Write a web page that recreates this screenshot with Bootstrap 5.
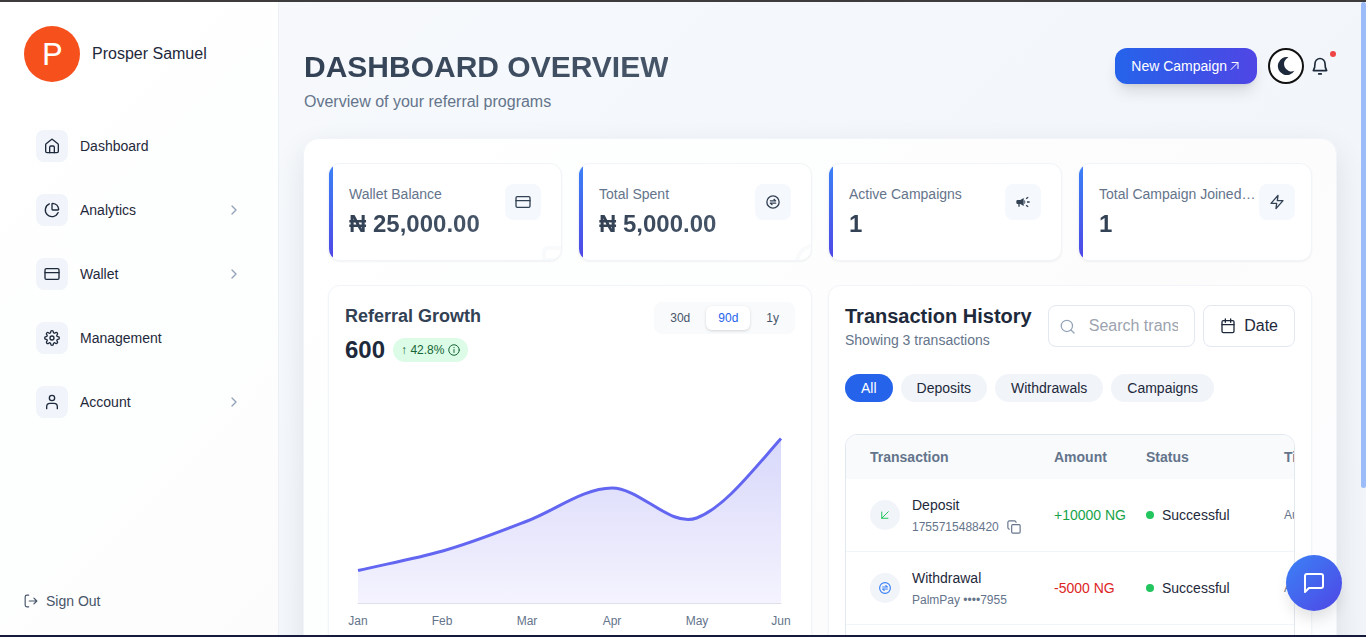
<!DOCTYPE html>
<html lang="en">
<head>
<meta charset="utf-8">
<meta name="viewport" content="width=device-width, initial-scale=1">
<title>Dashboard Overview</title>
<link href="https://cdn.jsdelivr.net/npm/bootstrap@5.3.0/dist/css/bootstrap.min.css" rel="stylesheet">
<style>
:root { --ink:#1e293b; --slate:#334155; --muted:#64748b; --line:#f1f5f9; --edge:#e2e8f0; }
body { font-family:"Liberation Sans",Arial,sans-serif; font-size:14px; line-height:20px; color:var(--ink); background:#f8fafc; }
a { color:inherit; text-decoration:none; }
svg { flex:none; display:block; }
.ico { fill:none; stroke:currentColor; stroke-width:2; stroke-linecap:round; stroke-linejoin:round; }
.shell { height:100vh; overflow:hidden; border-top:2px solid #3d3b3b; border-bottom:2px solid #15193a; padding-right:5px; background:linear-gradient(135deg,#f8f9fc 0%,#f4f8fc 40%,#f1f5f9 100%); }
.side { width:279px; flex:none; padding:24px; background:linear-gradient(135deg,#fff,#fdfefe 60%,#fdfcfd); border-right:1px solid #edf1f6; }
.avatar { width:56px; height:56px; background:#f6511d; color:#fff; font-family:Roboto,sans-serif; font-size:32px; }
.user-name { font-size:16px; line-height:24px; }
.side-nav { margin-top:48px; gap:32px; padding:0 12px; }
.side-nav a { gap:12px; }
.tile { width:32px; height:32px; border-radius:8px; background:#f1f4fa; }
.chev { color:#94a3b8; }
.sign-out { color:#475569; }
.main-area { padding:40px 24px 0; }
.page-head { padding:0 1px; }
.page-title { font-size:30px; line-height:36px; font-weight:700; margin:0 0 5px; background:linear-gradient(90deg,#334155,#475569); background-clip:text; -webkit-background-clip:text; color:transparent; }
.page-sub { font-size:16px; line-height:24px; color:var(--muted); margin:0; }
.title-block { padding-top:7px; }
.head-tools { padding-top:6px; gap:11px; }
.btn-campaign { height:36px; padding:0 16px; border:0; border-radius:12px; color:#fff; font-size:14px; gap:2px; background:linear-gradient(90deg,#2563eb,#4f46e5); box-shadow:0 10px 15px -3px rgba(0,0,0,.12),0 4px 6px -4px rgba(0,0,0,.12); }
.btn-moon { width:36px; height:36px; padding:0; border:2px solid #111; border-radius:50%; background:#fff; color:var(--ink); }
.btn-bell { width:32px; height:36px; border:0; padding:0 0 0 6px; margin-left:-11px; background:none; color:var(--ink); }
.bell-dot { position:absolute; top:3px; right:0; width:6px; height:6px; border-radius:50%; background:#ef4444; }
.panel { margin-top:24px; padding:24px; border:1px solid var(--line); border-radius:16px; background:linear-gradient(135deg,#fff,#fdfefe 30%,#fdfcfd 60%,#fcfdff); box-shadow:0 10px 30px rgba(15,23,42,.09); }
.box { background:#fff; border:1px solid var(--line); border-radius:12px; box-shadow:0 1px 2px rgba(0,0,0,.05); overflow:hidden; }
.cards4 { display:grid; grid-template-columns:repeat(4,minmax(0,1fr)); gap:16px; }
.cards2 { display:grid; grid-template-columns:repeat(2,minmax(0,1fr)); gap:16px; margin-top:24px; }
.stat { padding:20px; }
.stat::before { content:""; position:absolute; left:0; top:0; bottom:0; width:4px; background:linear-gradient(#3b82f6,#4f46e5); }
.stat-label { color:var(--muted); margin-bottom:4px; white-space:nowrap; }
.stat-value { font-size:24px; line-height:32px; font-weight:700; background:linear-gradient(90deg,#334155,#475569); background-clip:text; -webkit-background-clip:text; color:transparent; white-space:nowrap; }
.stat-tile { width:36px; height:36px; border-radius:8px; background:#f5f8fc; color:var(--slate); flex:none; }
.ghost { position:absolute; right:-28px; bottom:-28px; color:#f8fafc; }
.pane { padding:16px; }
.growth-title { font-size:18px; line-height:28px; font-weight:700; color:var(--slate); margin:0 0 4px; }
.growth-num { font-size:24px; line-height:32px; font-weight:700; }
.trend { height:24px; padding:0 8px; border-radius:12px; background:#dcfce7; color:#166534; font-size:12px; gap:4px; }
.range { background:#f9fafc; border-radius:8px; padding:4px; gap:4px; }
.range button { border:0; background:none; height:24px; border-radius:6px; padding:0 12px; font-size:12px; color:#475569; }
.range button.active { background:#fff; color:#2563eb; box-shadow:0 1px 3px rgba(0,0,0,.15); }
.growth-chart { width:100%; height:auto; margin-top:12px; }
.growth-chart text { font-size:12px; fill:var(--muted); text-anchor:middle; }
.tx-title { font-size:20px; line-height:28px; font-weight:700; margin:0; white-space:nowrap; }
.tx-count { color:var(--muted); white-space:nowrap; }
.search-wrap { flex:1; min-width:0; }
.search-wrap svg { position:absolute; left:12px; top:14px; color:#94a3b8; }
.search-wrap input { width:100%; height:42px; border:1px solid var(--edge); border-radius:8px; background:#fff; padding:0 16px 0 40px; font-size:16px; }
.search-wrap input::placeholder { color:#9ca3af; opacity:1; }
.btn-date { height:42px; border:1px solid var(--edge); border-radius:8px; background:#fff; padding:0 16px; font-size:16px; gap:8px; color:var(--ink); }
.pills { margin-top:24px; gap:8px; }
.pills button { height:28px; border:0; border-radius:14px; padding:0 16px; background:#f1f4f9; color:var(--ink); }
.pills button.active { background:#2563eb; color:#fff; }
.tx-wrap { margin-top:32px; border:1px solid var(--edge); border-radius:12px; overflow:hidden; }
.tx { width:620px; table-layout:fixed; border-collapse:separate; border-spacing:0; white-space:nowrap; }
.tx th { height:44px; padding:0 8px; background:#f8fafc; color:var(--muted); font-weight:700; }
.tx td { padding:16px 8px; border-bottom:1px solid var(--line); vertical-align:middle; }
.tx th:first-child, .tx td:first-child { padding-left:24px; }
.col-tx { width:200px; } .col-amt { width:92px; } .col-st { width:138px; }
.tx-icon { width:30px; height:30px; border-radius:50%; background:#f1f4f9; flex:none; }
.tx-ref { font-size:12px; line-height:16px; color:var(--muted); margin-top:4px; gap:8px; }
.is-in { color:#16a34a; } .is-out { color:#dc2626; } .is-swap { color:#3b82f6; }
.btn-copy { border:0; padding:0; background:none; color:var(--muted); }
.dot { width:8px; height:8px; border-radius:50%; background:#22c55e; }
.scroll-thumb { position:fixed; right:0; top:2px; width:5px; height:486px; border-radius:3px; background:#9bbcf9; }
.chat { position:fixed; right:24px; bottom:26px; width:56px; height:56px; border:0; border-radius:50%; color:#fff; background:linear-gradient(135deg,#3b82f6,#4f46e5); box-shadow:0 10px 15px -3px rgba(0,0,0,.12); }
</style>
</head>
<body>
<svg width="0" height="0" class="position-absolute" aria-hidden="true">
  <symbol id="i-card" viewBox="0 0 24 24"><rect x="1.500" y="4" width="21" height="16" rx="2"/><path d="M1.500 10h21"/></symbol>
  <symbol id="i-chev" viewBox="0 0 24 24"><path d="m9 18 6-6-6-6"/></symbol>
  <symbol id="i-swap" viewBox="0 0 24 24"><circle cx="12" cy="12" r="9.200"/><path d="M8 10.300h8l-2.500-2.300M16 13.700H8l2.500 2.300"/></symbol>
</svg>
<div class="shell d-flex">
  <aside class="side d-flex flex-column">
    <div class="d-flex align-items-center gap-2">
      <div class="avatar rounded-circle d-flex align-items-center justify-content-center me-1">P</div>
      <div class="user-name">Prosper Samuel</div>
    </div>
    <nav class="side-nav d-flex flex-column">
      <a href="#" class="d-flex align-items-center"><span class="tile d-flex align-items-center justify-content-center"><svg class="ico" width="16" height="16" viewBox="0 0 24 24"><path d="M2.500 10a2 2 0 0 1 .7-1.500l7.500-6a2 2 0 0 1 2.600 0l7.500 6a2 2 0 0 1 .7 1.500v10a2 2 0 0 1-2 2h-15a2 2 0 0 1-2-2z"/><path d="M8.500 22v-8a2 2 0 0 1 2-2h3a2 2 0 0 1 2 2v8"/></svg></span>Dashboard</a>
      <a href="#" class="d-flex align-items-center"><span class="tile d-flex align-items-center justify-content-center"><svg class="ico" width="16" height="16" viewBox="0 0 24 24"><path d="M21.210 15.890A10 10 0 1 1 8 2.830"/><path d="M21 12a1 1 0 0 0 1-1A10 10 0 0 0 13 2a1 1 0 0 0-1 1v8a1 1 0 0 0 1 1z"/></svg></span>Analytics<svg class="ico chev ms-auto" width="16" height="16"><use href="#i-chev"/></svg></a>
      <a href="#" class="d-flex align-items-center"><span class="tile d-flex align-items-center justify-content-center"><svg class="ico" width="16" height="16"><use href="#i-card"/></svg></span>Wallet<svg class="ico chev ms-auto" width="16" height="16"><use href="#i-chev"/></svg></a>
      <a href="#" class="d-flex align-items-center"><span class="tile d-flex align-items-center justify-content-center"><svg class="ico" width="16" height="16" viewBox="0 0 24 24"><circle cx="12" cy="12" r="3"/><path d="M19.400 15a1.650 1.650 0 0 0 .33 1.820l.06.06a2 2 0 1 1-2.830 2.830l-.06-.06a1.650 1.650 0 0 0-2.800 1.170V21a2 2 0 0 1-4 0v-.09A1.650 1.650 0 0 0 7.180 19.730l-.06.06a2 2 0 1 1-2.830-2.830l.06-.06A1.650 1.650 0 0 0 3.090 14H3a2 2 0 0 1 0-4h.09A1.650 1.650 0 0 0 4.270 7.180l-.06-.06a2 2 0 1 1 2.830-2.830l.06.06A1.650 1.650 0 0 0 10 3.090V3a2 2 0 0 1 4 0v.09a1.650 1.650 0 0 0 2.820 1.180l.06-.06a2 2 0 1 1 2.830 2.830l-.06.06A1.650 1.650 0 0 0 20.910 10H21a2 2 0 0 1 0 4h-.09a1.650 1.650 0 0 0-1.510 1z"/></svg></span>Management</a>
      <a href="#" class="d-flex align-items-center"><span class="tile d-flex align-items-center justify-content-center"><svg class="ico" width="16" height="16" viewBox="0 0 24 24"><circle cx="12" cy="6" r="4"/><path d="M4 22v-3a5 5 0 0 1 5-5h6a5 5 0 0 1 5 5v3"/></svg></span>Account<svg class="ico chev ms-auto" width="16" height="16"><use href="#i-chev"/></svg></a>
    </nav>
    <a href="#" class="sign-out d-flex align-items-center gap-2 mt-auto"><svg class="ico" width="14" height="14" viewBox="0 0 24 24"><path d="M8 22H5a3 3 0 0 1-3-3V5a3 3 0 0 1 3-3h3M17 17l5-5-5-5M22 12H9"/></svg>Sign Out</a>
  </aside>

  <main class="main-area flex-grow-1">
    <header class="page-head d-flex justify-content-between align-items-start">
      <div class="title-block">
        <h1 class="page-title">DASHBOARD OVERVIEW</h1>
        <p class="page-sub">Overview of your referral programs</p>
      </div>
      <div class="head-tools d-flex align-items-center">
        <button type="button" class="btn-campaign d-flex align-items-center">New Campaign<svg class="ico" width="12" height="12" viewBox="0 0 24 24"><path d="M4 19 18 5M6 5h12v12"/></svg></button>
        <button type="button" class="btn-moon d-flex align-items-center justify-content-center" aria-label="Dark mode"><svg width="20" height="20" viewBox="0 0 20 20" fill="currentColor"><path d="M12.500 1.200A9 9 0 1 0 18.500 14.800 7.200 7.200 0 0 1 12.500 1.200z"/></svg></button>
        <button type="button" class="btn-bell position-relative d-flex align-items-center" aria-label="Notifications"><svg class="ico" width="20" height="20" viewBox="0 0 24 24"><path d="M10.500 21.500h3M4 17.500h16c-1.500-2-2-4-2-8.500a6 6 0 0 0-12 0c0 4.500-.5 6.500-2 8.500z"/></svg><span class="bell-dot"></span></button>
      </div>
    </header>

    <section class="panel">
      <div class="cards4">
        <article class="box stat position-relative d-flex justify-content-between">
          <div class="me-1"><div class="stat-label">Wallet Balance</div><div class="stat-value">₦ 25,000.00</div></div>
          <span class="stat-tile d-flex align-items-center justify-content-center"><svg class="ico" width="16" height="16"><use href="#i-card"/></svg></span>
          <svg class="ico ghost" width="48" height="48"><use href="#i-card"/></svg>
        </article>
        <article class="box stat position-relative d-flex justify-content-between">
          <div class="me-1"><div class="stat-label">Total Spent</div><div class="stat-value">₦ 5,000.00</div></div>
          <span class="stat-tile d-flex align-items-center justify-content-center"><svg class="ico" width="16" height="16"><use href="#i-swap"/></svg></span>
          <svg class="ico ghost" width="48" height="48"><use href="#i-swap"/></svg>
        </article>
        <article class="box stat position-relative d-flex justify-content-between">
          <div class="me-1"><div class="stat-label">Active Campaigns</div><div class="stat-value">1</div></div>
          <span class="stat-tile d-flex align-items-center justify-content-center"><svg width="16" height="16" viewBox="0 0 24 24" fill="currentColor"><path d="M18 11v2h4v-2zM16 17.600c1 .7 2.200 1.600 3.200 2.400.4-.5.8-1.100 1.200-1.600-1-.8-2.200-1.700-3.200-2.400zM20.400 5.600 19.200 4c-1 .8-2.200 1.700-3.200 2.400l1.200 1.600c1-.7 2.200-1.600 3.200-2.400zM4 9a2 2 0 0 0-2 2v2a2 2 0 0 0 2 2h1v4h2v-4h1l5 3V6L8 9zM15.500 12a4.500 4.500 0 0 0-1.500-3.300v6.700a4.500 4.500 0 0 0 1.500-3.400z"/></svg></span>
        </article>
        <article class="box stat position-relative d-flex justify-content-between">
          <div class="me-1"><div class="stat-label">Total Campaign Joined…</div><div class="stat-value">1</div></div>
          <span class="stat-tile d-flex align-items-center justify-content-center"><svg class="ico" width="16" height="16" viewBox="0 0 24 24"><path d="M13.500 2 3 14h8.500l-1 8L21 10h-8.500z"/></svg></span>
        </article>
      </div>

      <div class="cards2">
        <section class="box pane">
          <div class="d-flex justify-content-between align-items-start">
            <div>
              <h2 class="growth-title">Referral Growth</h2>
              <div class="d-flex align-items-center gap-2">
                <span class="growth-num">600</span>
                <span class="trend d-flex align-items-center"><span>↑ 42.8%</span><svg class="ico" width="12" height="12" viewBox="0 0 24 24"><circle cx="12" cy="12" r="10.500"/><path d="M12 17v-6M12 7v.5"/></svg></span>
              </div>
            </div>
            <div class="range d-flex" role="group" aria-label="Range">
              <button type="button">30d</button><button type="button" class="active">90d</button><button type="button">1y</button>
            </div>
          </div>
          <svg class="growth-chart" viewBox="0 0 450 270" role="img" aria-label="Referral growth, January to June">
            <defs><linearGradient id="area" x1="0" y1="0" x2="0" y2="1"><stop offset="0" stop-color="#d8d8fb"/><stop offset="1" stop-color="#f4f3fe"/></linearGradient></defs>
            <path fill="url(#area)" d="M13 192.500C41 186 69 181 97.700 173S154 154 182.300 143C210.500 132 239 110 267 110C295 110 326 150 351.700 140C380 129 408 92 436 60.500V225H13z"/>
            <path stroke="#dfe1ea" d="M12.500 225.500h424"/>
            <path fill="none" stroke="#6366f1" stroke-width="3" d="M13 192.500C41 186 69 181 97.700 173S154 154 182.300 143C210.500 132 239 110 267 110C295 110 326 150 351.700 140C380 129 408 92 436 60.500"/>
            <text x="13" y="247">Jan</text><text x="97" y="247">Feb</text><text x="182" y="247">Mar</text><text x="267" y="247">Apr</text><text x="352" y="247">May</text><text x="436" y="247">Jun</text>
          </svg>
        </section>

        <section class="box pane">
          <div class="d-flex align-items-center gap-3">
            <div><h2 class="tx-title">Transaction History</h2><div class="tx-count">Showing 3 transactions</div></div>
            <div class="d-flex gap-2 flex-grow-1">
              <div class="search-wrap position-relative"><svg class="ico" width="15" height="15" viewBox="0 0 24 24"><circle cx="11" cy="11" r="9"/><path d="m22.500 22.500-5-5"/></svg><input type="text" aria-label="Search transactions" placeholder="Search transactions..."></div>
              <button type="button" class="btn-date d-flex align-items-center"><svg class="ico" width="16" height="16" viewBox="0 0 24 24"><rect x="3" y="4" width="18" height="18" rx="2"/><path d="M8 1.500v5M16 1.500v5M3 10h18"/></svg>Date</button>
            </div>
          </div>
          <div class="pills d-flex">
            <button type="button" class="active">All</button><button type="button">Deposits</button><button type="button">Withdrawals</button><button type="button">Campaigns</button>
          </div>
          <div class="tx-wrap">
            <table class="tx">
              <colgroup><col class="col-tx"><col class="col-amt"><col class="col-st"><col></colgroup>
              <thead><tr><th>Transaction</th><th>Amount</th><th>Status</th><th>Time</th></tr></thead>
              <tbody>
                <tr>
                  <td><div class="d-flex align-items-center"><span class="tx-icon is-in d-flex align-items-center justify-content-center me-2"><svg class="ico" width="12" height="12" viewBox="0 0 24 24"><path stroke="#22c55e" d="M18.500 5.500 5.500 18.500M5.500 6v12.500H18"/></svg></span><div class="ms-1"><div>Deposit</div><div class="tx-ref d-flex align-items-center">1755715488420<button type="button" class="btn-copy" aria-label="Copy"><svg class="ico" width="14" height="14" viewBox="0 0 24 24"><rect x="8" y="8" width="14.500" height="14.500" rx="2"/><path d="M4 15.500a2.500 2.500 0 0 1-2.500-2.500V4A2.500 2.500 0 0 1 4 1.500h9A2.500 2.500 0 0 1 15.500 4"/></svg></button></div></div></div></td>
                  <td class="is-in">+10000 NG</td>
                  <td><div class="d-flex align-items-center gap-2"><span class="dot"></span>Successful</div></td>
                  <td class="tx-ref">Aug 20, 2025</td>
                </tr>
                <tr>
                  <td><div class="d-flex align-items-center"><span class="tx-icon is-swap d-flex align-items-center justify-content-center me-2"><svg class="ico" width="14" height="14"><use href="#i-swap"/></svg></span><div class="ms-1"><div>Withdrawal</div><div class="tx-ref">PalmPay ••••7955</div></div></div></td>
                  <td class="is-out">-5000 NG</td>
                  <td><div class="d-flex align-items-center gap-2"><span class="dot"></span>Successful</div></td>
                  <td class="tx-ref">Aug 20, 2025</td>
                </tr>
                <tr><td colspan="4">&nbsp;</td></tr>
              </tbody>
            </table>
          </div>
        </section>
      </div>
    </section>
  </main>
</div>
<div class="scroll-thumb"></div>
<button type="button" class="chat d-flex align-items-center justify-content-center" aria-label="Open chat"><svg class="ico" width="24" height="24" viewBox="0 0 24 24"><path d="M21 15a2 2 0 0 1-2 2H7l-4 4V5a2 2 0 0 1 2-2h14a2 2 0 0 1 2 2z"/></svg></button>
<script src="https://cdn.jsdelivr.net/npm/bootstrap@5.3.0/dist/js/bootstrap.bundle.min.js"></script>
</body>
</html>
